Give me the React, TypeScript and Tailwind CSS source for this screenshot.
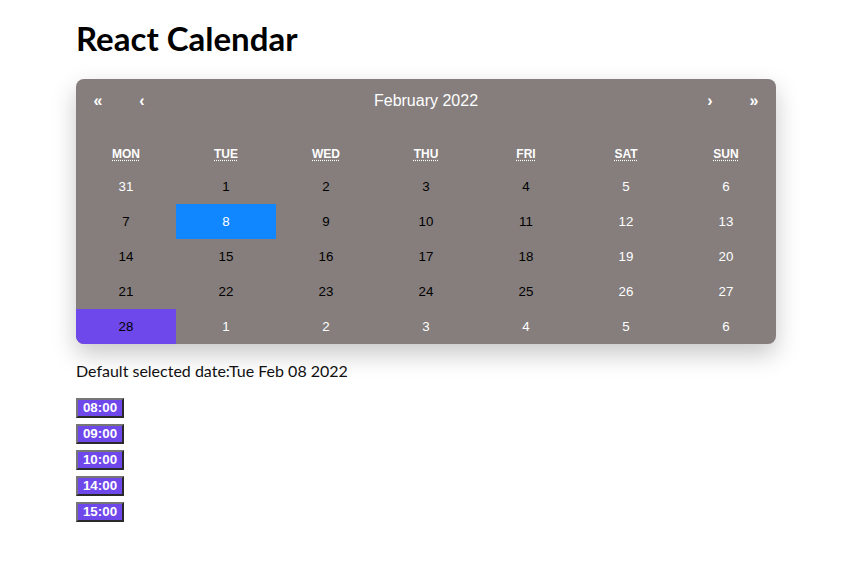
const weekdays = ["Mon", "Tue", "Wed", "Thu", "Fri", "Sat", "Sun"];

type Day = { n: number; other?: boolean };

const weeks: Day[][] = [
  [{ n: 31, other: true }, { n: 1 }, { n: 2 }, { n: 3 }, { n: 4 }, { n: 5 }, { n: 6 }],
  [{ n: 7 }, { n: 8 }, { n: 9 }, { n: 10 }, { n: 11 }, { n: 12 }, { n: 13 }],
  [{ n: 14 }, { n: 15 }, { n: 16 }, { n: 17 }, { n: 18 }, { n: 19 }, { n: 20 }],
  [{ n: 21 }, { n: 22 }, { n: 23 }, { n: 24 }, { n: 25 }, { n: 26 }, { n: 27 }],
  [{ n: 28 }, { n: 1, other: true }, { n: 2, other: true }, { n: 3, other: true }, { n: 4, other: true }, { n: 5, other: true }, { n: 6, other: true }],
];

const times = ["08:00", "09:00", "10:00", "14:00", "15:00"];

const Calendar = () => {
  return (
    <div className="w-[700px] rounded-lg bg-[#857e7d] shadow-[0_10px_24px_rgba(0,0,0,0.22)] font-['Liberation_Sans',Arial,sans-serif] overflow-hidden">
      {/* navigation */}
      <div className="flex h-[44px] mb-[16px] text-white">
        <button className="w-[44px] text-[16px] font-bold">«</button>
        <button className="w-[44px] text-[16px] font-bold">‹</button>
        <button className="flex-1 text-[16px]">February 2022</button>
        <button className="w-[44px] text-[16px] font-bold">›</button>
        <button className="w-[44px] text-[16px] font-bold">»</button>
      </div>

      <div className="grid grid-cols-7 h-[30px] items-center text-center text-[12px] font-bold uppercase text-white">
        {weekdays.map((d) => (
          <div key={d}>
            <abbr title={d} className="underline decoration-dotted underline-offset-2">
              {d}
            </abbr>
          </div>
        ))}
      </div>

      <div className="grid grid-cols-7">
        {weeks.flat().map((day, i) => {
          const col = i % 7;
          const weekend = col >= 5;
          const selected = !day.other && day.n === 8;
          const today = !day.other && day.n === 28;
          let cls = "text-black";
          if (day.other || weekend) cls = "text-white";
          if (selected) cls = "bg-[#1087ff] text-white";
          if (today) cls = "bg-[#6f48eb] text-black";
          return (
            <div key={i} className={`h-[35px] pt-[1px] flex items-center justify-center text-[13.33px] ${cls}`}>
              {day.n}
            </div>
          );
        })}
      </div>
    </div>
  );
};

export default function App() {
  return (
    <div className="bg-white min-h-[573px] px-[76px] font-['Lato','Noto_Sans',sans-serif] text-black">
      <h1 className="pt-[18px] pb-[20px] text-[33px] font-bold leading-[41px]">
        React Calendar
      </h1>
      <Calendar />
      <p className="mt-[16px] text-[16px] leading-[22px] text-[#111]">
        Default selected date:Tue Feb 08 2022
      </p>
      <div className="mt-[16px] flex flex-col gap-[6px] items-start">
        {times.map((t) => (
          <button
            key={t}
            className="w-[48px] h-[20px] bg-[#6f48eb] border-2 border-t-[#767676] border-l-[#767676] border-b-[#2a2a2a] border-r-[#2a2a2a] text-white text-[13.33px] font-bold leading-none font-['Liberation_Sans',Arial,sans-serif]"
          >
            {t}
          </button>
        ))}
      </div>
    </div>
  );
}
